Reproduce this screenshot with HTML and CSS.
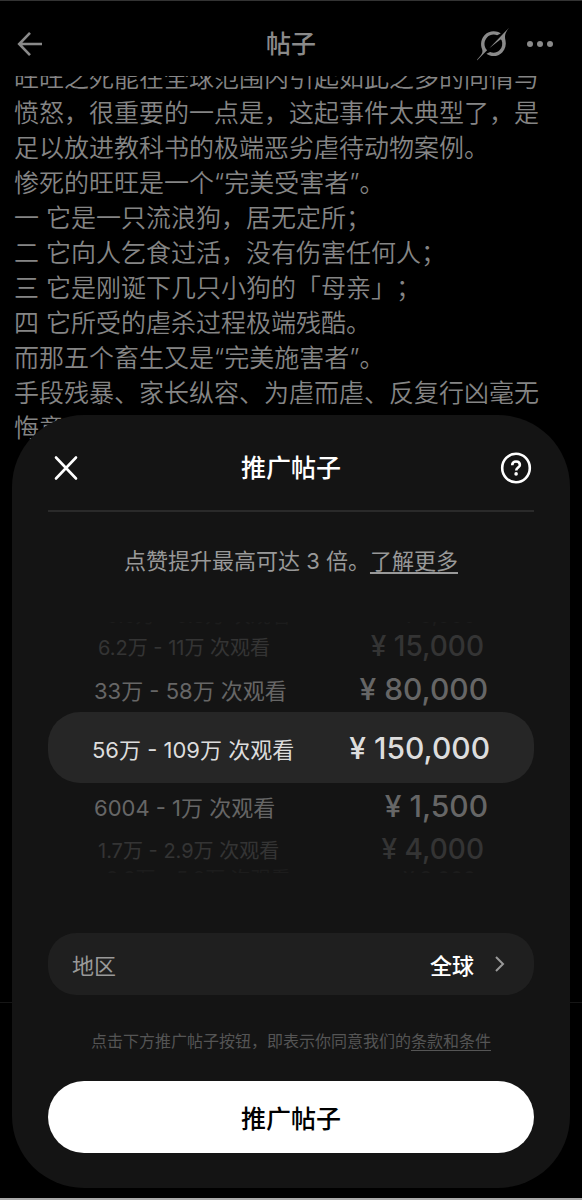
FILE: index.html
```html
<!DOCTYPE html>
<html lang="zh-CN">
<head>
<meta charset="utf-8">
<meta name="viewport" content="width=device-width, initial-scale=1">
<title>推广帖子</title>
<link rel="stylesheet" href="styles.css">
</head>
<body>
<div class="screen">
  <header class="topbar">
    <button class="icon-btn" type="button" aria-label="返回">
      <svg width="26" height="26" viewBox="0 0 26 26" fill="none" stroke="currentColor" stroke-width="2.6"><path d="M25 13H2.500M13 1.800L2.200 13L13 24.200"/></svg>
    </button>
    <h1 class="topbar-title">帖子</h1>
    <div class="topbar-actions">
      <button class="icon-btn" type="button" aria-label="Grok">
        <svg width="32" height="34" viewBox="0 0 32 34" fill="currentColor"><path d="M12.300 21.200L23.100 12.800C23.600 12.400 24.300 12.600 24.600 13.200C25.900 16.500 25.300 20.400 22.700 23.100C20.100 25.800 16.400 26.400 13.100 25L9.400 26.800C14.700 30.500 21.200 29.600 25.200 25.400C28.400 22.100 29.400 17.600 28.500 13.500C27.200 7.600 28.800 5.300 32 0.800L27.600 5.300L12.300 21.200M10.100 23.200C6.300 19.500 6.900 13.700 10.200 10.300C12.600 7.800 16.600 6.800 20.100 8.300L23.800 6.500C23.100 6 22.300 5.500 21.300 5.100C16.800 3.200 11.400 4.100 7.700 7.900C4.200 11.500 3.100 17.100 5 21.900C6.400 25.500 4.100 28.100 1.700 30.700C0.900 31.600 0 32.500 0 33.500L10.100 23.200"/></svg>
      </button>
      <button class="icon-btn" type="button" aria-label="更多">
        <svg width="28" height="8" viewBox="0 0 28 8" fill="currentColor"><circle cx="4" cy="4" r="3"/><circle cx="14" cy="4" r="3"/><circle cx="24" cy="4" r="3"/></svg>
      </button>
    </div>
  </header>
  <main class="post">
    <div class="post-text">
      <p>旺旺之死能在全球范围内引起如此之多的同情与愤怒，很重要的一点是，这起事件太典型了，是足以放进教科书的极端恶劣虐待动物案例。</p>
      <p>惨死的旺旺是一个“完美受害者”。</p>
      <p>一 它是一只流浪狗，居无定所；</p>
      <p>二 它向人乞食过活，没有伤害任何人；</p>
      <p>三 它是刚诞下几只小狗的「母亲」；</p>
      <p>四 它所受的虐杀过程极端残酷。</p>
      <p>而那五个畜生又是“完美施害者”。</p>
      <p>手段残暴、家长纵容、为虐而虐、反复行凶毫无悔意</p>
    </div>
  </main>
  <div class="reply-bar"></div>

  <section class="sheet" role="dialog" aria-labelledby="sheet-title">
    <header class="sheet-head">
      <button class="icon-btn" type="button" aria-label="关闭">
        <svg width="36" height="36" viewBox="0 0 36 36" fill="none" stroke="currentColor" stroke-width="2.600" stroke-linecap="round"><path d="M8 7.500L28 28.500M28 7.500L8 28.500"/></svg>
      </button>
      <h2 class="sheet-title" id="sheet-title">推广帖子</h2>
      <button class="icon-btn" type="button" aria-label="帮助">
        <svg width="36" height="36" viewBox="0 0 36 36" fill="none" stroke="currentColor"><ellipse cx="18" cy="18" rx="13.800" ry="14.200" stroke-width="2.600"/><path d="M14.200 15.200C14.200 12.800 15.800 11.500 18 11.500C20.200 11.500 21.900 12.800 21.900 14.900C21.900 17.500 18.200 17.700 18.200 20.600" stroke-width="2.600"/><circle cx="18.100" cy="23.900" r="1.800" fill="currentColor" stroke="none"/></svg>
      </button>
    </header>
    <p class="intro">点赞提升最高可达 3 倍。<a href="#more">了解更多</a></p>

    <div class="wheel" role="radiogroup" aria-label="预算">
      <label class="row edge edge-top"><input type="radio" name="budget"><span>3.3万 - 5.8万 次观看</span><b>¥ 8,000</b></label>
      <label class="row far"><input type="radio" name="budget"><span>6.2万 - 11万 次观看</span><b>¥ 15,000</b></label>
      <label class="row near"><input type="radio" name="budget"><span>33万 - 58万 次观看</span><b>¥ 80,000</b></label>
      <label class="row current"><input type="radio" name="budget" checked><span>56万 - 109万 次观看</span><b>¥ 150,000</b></label>
      <label class="row near"><input type="radio" name="budget"><span>6004 - 1万 次观看</span><b>¥ 1,500</b></label>
      <label class="row far"><input type="radio" name="budget"><span>1.7万 - 2.9万 次观看</span><b>¥ 4,000</b></label>
      <label class="row edge edge-bottom"><input type="radio" name="budget"><span>3.3万 - 5.8万 次观看</span><b>¥ 8,000</b></label>
    </div>

    <button class="region" type="button">
      <span class="region-label">地区</span>
      <span class="region-value">全球</span>
      <svg width="12" height="18" viewBox="0 0 12 18" fill="none" stroke="currentColor" stroke-width="2"><path d="M2 2L9 9L2 16"/></svg>
    </button>
    <p class="terms">点击下方推广帖子按钮，即表示你同意我们的<a href="#terms">条款和条件</a></p>
    <button class="submit" type="button">推广帖子</button>
  </section>
</div>
</body>
</html>
```
FILE: styles.css
```css
* { box-sizing: border-box; }
body {
  margin: 0;
  background: #000;
  color: #fff;
  font-family: Inter, "Noto Sans CJK SC", sans-serif;
  text-spacing-trim: space-all;
}
h1, h2, p { margin: 0; }
button {
  margin: 0;
  padding: 0;
  border: 0;
  background: none;
  color: inherit;
  font: inherit;
}
a { color: inherit; text-underline-offset: 3px; text-decoration-thickness: 2px; }
svg { display: block; }

.screen {
  position: relative;
  display: flex;
  flex-direction: column;
  height: 100vh;
  overflow: hidden;
  border-top: 1px solid #333;
  border-bottom: 2px solid #aaa;
}

/* dimmed page behind the sheet */
.topbar {
  display: grid;
  grid-template-columns: 1fr auto 1fr;
  align-items: center;
  height: 75px;
  padding: 10px 17px 0;
  color: #8a8a8a;
}
.topbar-title { font-size: 25px; line-height: 36px; font-weight: 500; }
.topbar-actions {
  display: flex;
  align-items: center;
  justify-content: flex-end;
  gap: 17px;
  padding-right: 11px;
}
.post {
  display: flex;
  flex-direction: column;
  flex: 1;
  min-height: 0;
  overflow: hidden;
  padding: 0 30px 0 14px;
}
.post-text {
  margin-top: -15px;
  color: #858585;
  font-size: 25px;
  line-height: 35px;
  font-weight: 350;
}
.reply-bar { height: 196px; border-top: 1px solid #161616; }

/* sheet */
.sheet {
  position: absolute;
  left: 12px;
  right: 12px;
  bottom: 10px;
  display: flex;
  flex-direction: column;
  padding: 36px 36px 35px;
  border-radius: 72px;
  background: #141414;
}
.sheet-head {
  display: flex;
  align-items: center;
  justify-content: space-between;
  height: 61px;
  padding-bottom: 25px;
  border-bottom: 2px solid #2a2a2a;
}
.sheet-title { font-size: 25px; line-height: 36px; font-weight: 500; }
.intro {
  padding-top: 31px;
  color: #999;
  font-size: 22px;
  line-height: 36px;
  text-align: center;
}

.wheel {
  display: flex;
  flex-direction: column;
  margin-top: 43px;
}
.row {
  display: flex;
  align-items: center;
  justify-content: space-between;
  white-space: nowrap;
}
.row input { position: absolute; opacity: 0; pointer-events: none; }
.row b { font-size: 30px; font-weight: 500; }
.current {
  height: 71px;
  padding: 0 44px;
  border-radius: 32px;
  background: #262626;
  color: #ddd;
  font-size: 22px;
}
.near { height: 46px; padding: 0 46px; color: #666; font-size: 22px; }
.far { height: 40px; padding: 0 50px; color: #343434; font-size: 20px; }
.far b { font-size: 28px; }
.edge { height: 4px; padding: 0 58px; overflow: hidden; color: #1c1c1c; font-size: 20px; line-height: 20px; }
.edge b { font-size: 20px; }
.edge-top { align-items: flex-end; }
.edge-bottom { align-items: flex-start; }

.region {
  display: flex;
  align-items: center;
  height: 62px;
  margin-top: 60px;
  padding: 0 28px 0 24px;
  border-radius: 28px;
  background: #1f1f1f;
  color: #999;
  font-size: 22px;
}
.region-value { margin: 0 20px 0 auto; color: #fff; font-weight: 500; }
.terms {
  margin-top: 32px;
  color: #555;
  font-size: 16px;
  line-height: 28px;
  text-align: center;
}
.terms a { text-decoration-thickness: 1px; }
.submit {
  height: 72px;
  margin-top: 26px;
  border-radius: 36px;
  background: #fff;
  color: #000;
  font-size: 25px;
  font-weight: 500;
}
```
